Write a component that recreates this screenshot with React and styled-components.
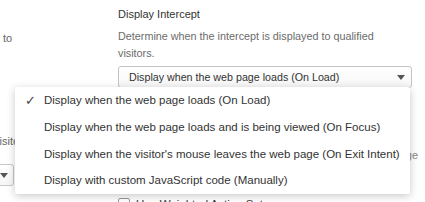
import React from "react";
import styled, { createGlobalStyle } from "styled-components";

const GlobalStyle = createGlobalStyle`
  html, body {
    margin: 0;
    padding: 0;
    background: #ffffff;
    overflow: hidden;
  }
  body {
    font-family: "Liberation Sans", Arial, sans-serif;
    -webkit-font-smoothing: antialiased;
  }
`;

const options = [
  "Display when the web page loads (On Load)",
  "Display when the web page loads and is being viewed (On Focus)",
  "Display when the visitor's mouse leaves the web page (On Exit Intent)",
  "Display with custom JavaScript code (Manually)",
];

function Caret() {
  return (
    <svg width="8" height="5" viewBox="0 0 8 5">
      <path d="M0 0 L8 0 L4 5 Z" fill="#555" />
    </svg>
  );
}

function App() {
  return (
    <Wrapper>
      <GlobalStyle />
      <LeftColumn>
        <SideText $top={30}>to</SideText>
        <SideText $top={86} $shift={-9}>visitors.</SideText>
        <SideSelect>
          <Caret />
        </SideSelect>
      </LeftColumn>

      <RightColumn>
        <Label>Display Intercept</Label>
        <Description>
          Determine when the intercept is displayed to qualified visitors.
        </Description>
        <SelectBox>
          <span>Display when the web page loads (On Load)</span>
          <Caret />
        </SelectBox>
        <HiddenHint>Choose where the intercept appears on the page</HiddenHint>
        <CheckRow>
          <CheckBox />
          <CheckLabel>Use Weighted Action Sets</CheckLabel>
        </CheckRow>
      </RightColumn>

      <Menu>
        {options.map((text, i) => (
          <MenuItem key={text}>
            <Check>{i === 0 ? "✓" : ""}</Check>
            <span>{text}</span>
          </MenuItem>
        ))}
      </Menu>
    </Wrapper>
  );
}

export default App;

const Wrapper = styled.div`
  position: relative;
  display: grid;
  grid-template-columns: 118px 294px;
  width: 425px;
  height: 202px;
  overflow: hidden;
`;

const LeftColumn = styled.div`
  display: flex;
  flex-direction: column;
  padding-left: 3px;
`;

const SideText = styled.div`
  margin-top: ${(p) => p.$top}px;
  margin-left: ${(p) => p.$shift || 0}px;
  font-size: 11px;
  line-height: 17px;
  color: #666666;
  white-space: nowrap;
`;

const SideSelect = styled.div`
  margin-top: 14px;
  margin-left: -93px;
  width: 104px;
  height: 22px;
  box-sizing: border-box;
  border: 1px solid #c8c8c8;
  border-radius: 3px;
  background: linear-gradient(#ffffff, #f6f6f6);
  display: flex;
  align-items: center;
  justify-content: flex-end;
  padding-right: 5px;
`;

const RightColumn = styled.div`
  display: flex;
  flex-direction: column;
`;

const Label = styled.div`
  margin-top: 6px;
  font-size: 11px;
  line-height: 17px;
  color: #333333;
`;

const Description = styled.div`
  margin-top: 5px;
  font-size: 10.8px;
  line-height: 17px;
  color: #6b6b6b;
`;

const SelectBox = styled.div`
  margin-top: 4px;
  height: 22px;
  box-sizing: border-box;
  border: 1px solid #c4c4c4;
  border-radius: 3px;
  background: linear-gradient(#ffffff, #f7f7f7);
  display: flex;
  align-items: center;
  justify-content: space-between;
  padding: 0 6px 0 10px;
  font-size: 10.7px;
  color: #333333;
  white-space: nowrap;
`;

const HiddenHint = styled.div`
  margin-top: 59px;
  width: 300px;
  font-size: 11px;
  line-height: 17px;
  color: #888888;
  text-align: right;
  white-space: nowrap;
`;

const CheckRow = styled.div`
  margin-top: 34px;
  display: flex;
  align-items: flex-start;
  gap: 6px;
`;

const CheckBox = styled.div`
  width: 12px;
  height: 12px;
  box-sizing: border-box;
  border: 1px solid #9a9a9a;
  border-radius: 2px;
  background: #ffffff;
`;

const CheckLabel = styled.div`
  font-size: 11.5px;
  line-height: 13px;
  color: #333333;
`;

const Menu = styled.div`
  position: absolute;
  left: 15px;
  top: 87px;
  width: 395px;
  background: #ffffff;
  box-shadow: 0 2px 9px rgba(0, 0, 0, 0.22);
  border-radius: 2px;
  display: flex;
  flex-direction: column;
`;

const MenuItem = styled.div`
  height: 26.7px;
  display: flex;
  align-items: center;
  font-size: 11.5px;
  color: #333333;
  white-space: nowrap;
`;

const Check = styled.span`
  flex: none;
  box-sizing: border-box;
  width: 29px;
  padding-left: 10px;
  font-size: 13px;
  color: #444444;
`;
